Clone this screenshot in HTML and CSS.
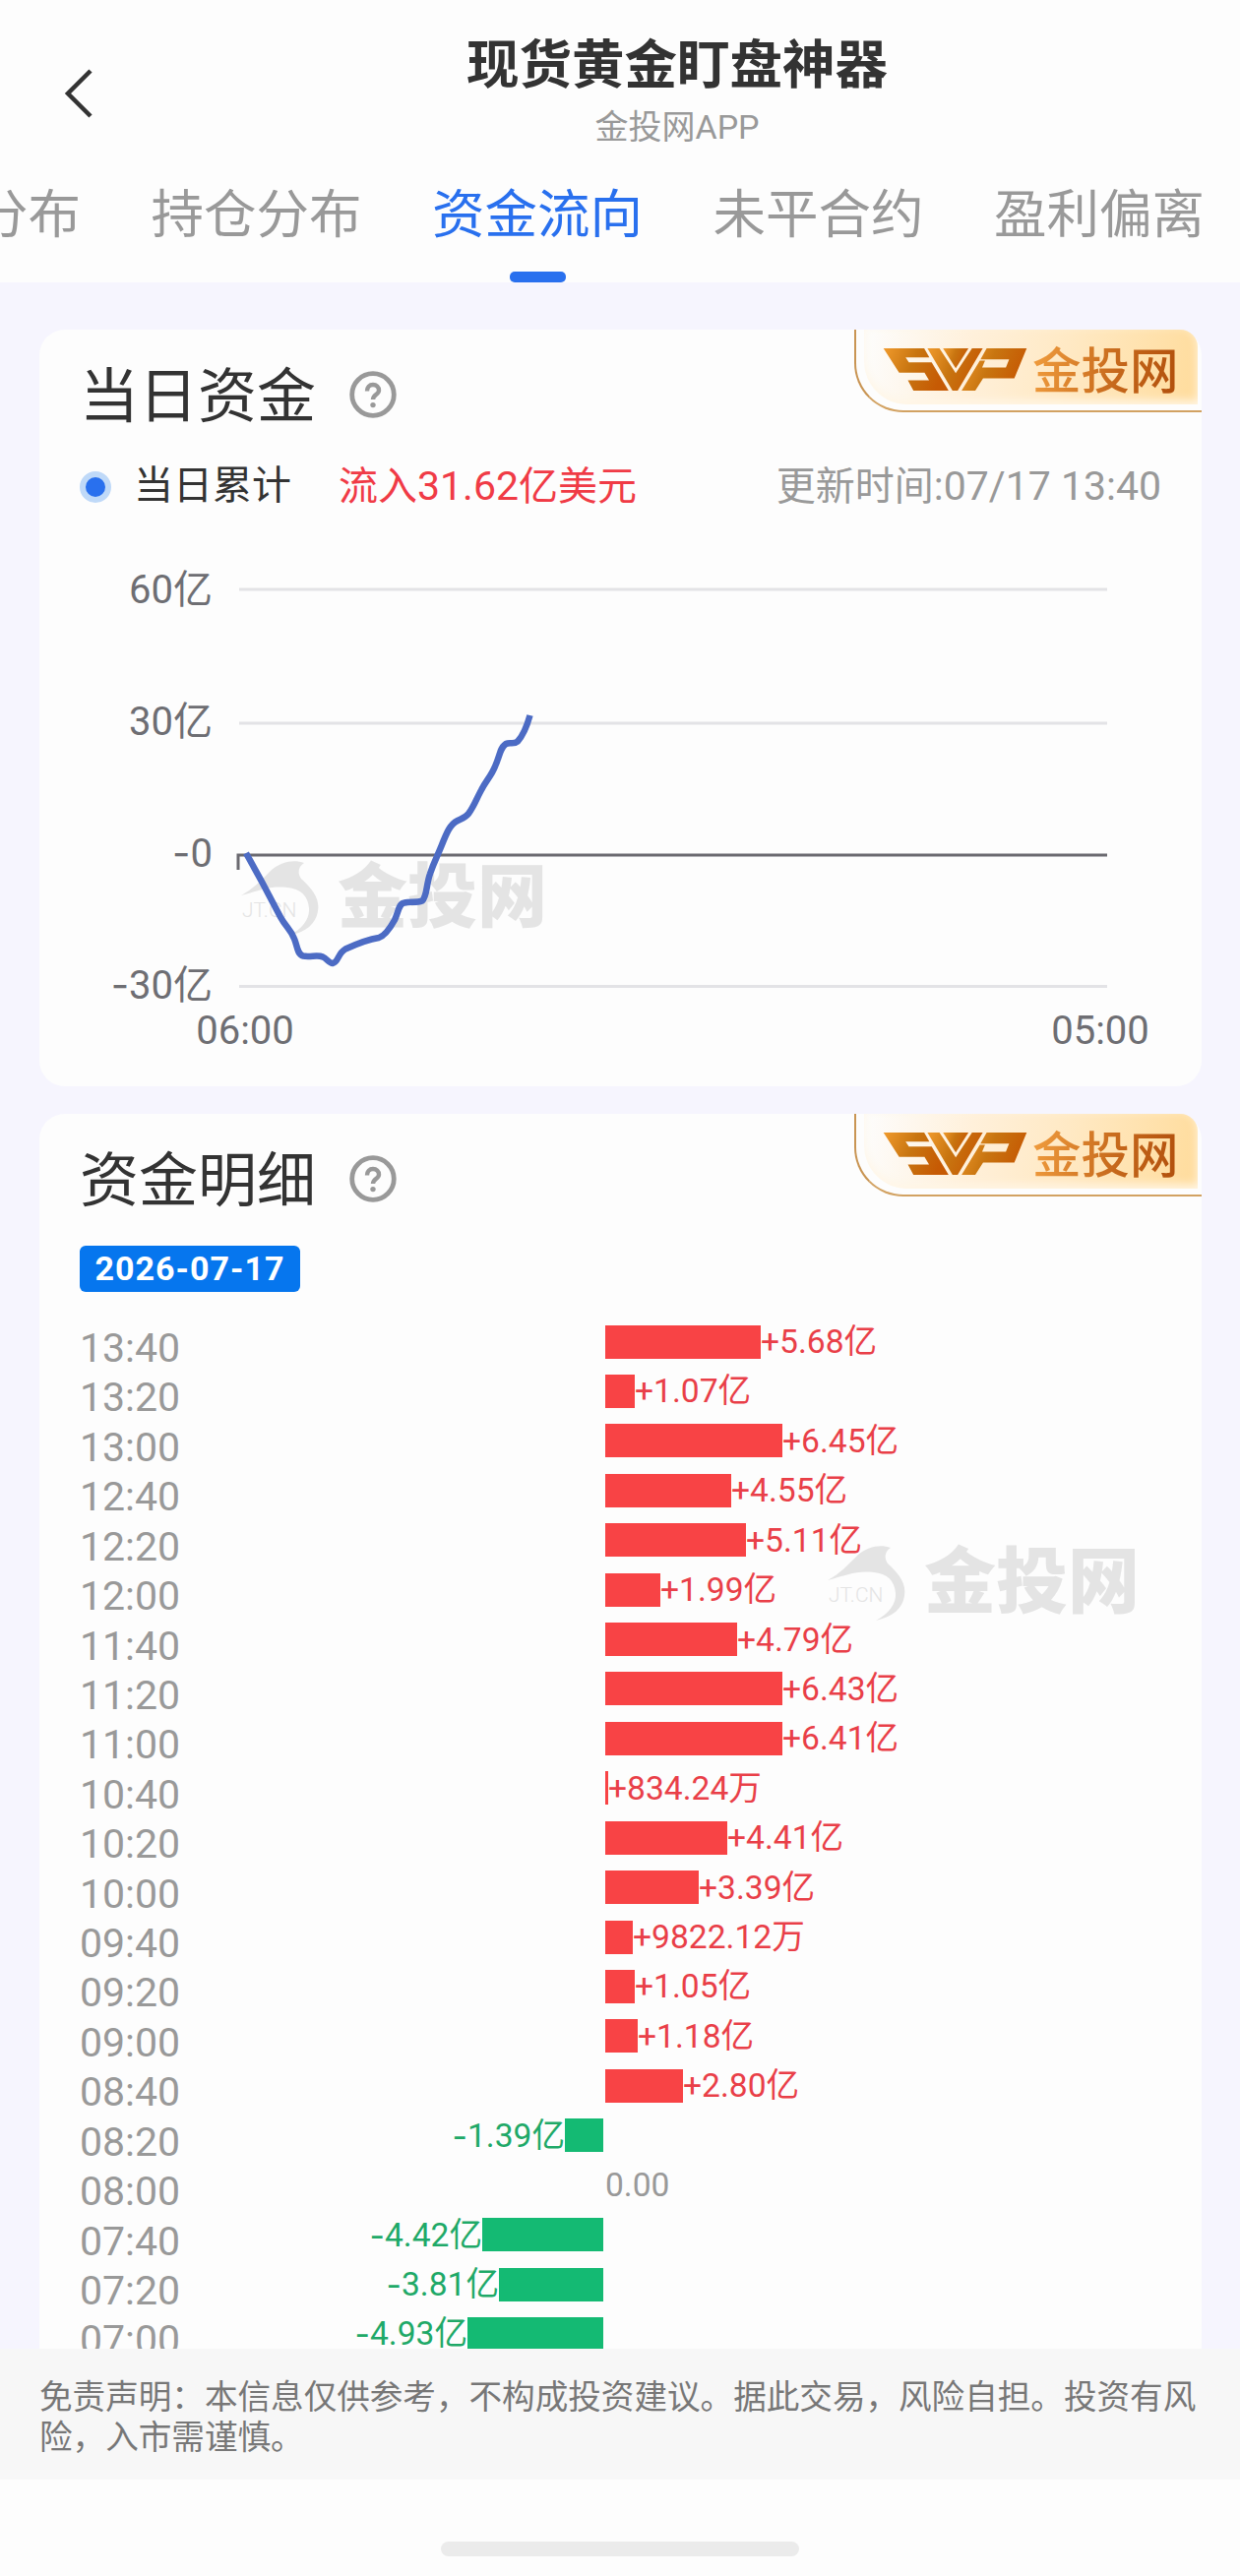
FILE: index.html
```html
<!DOCTYPE html>
<html lang="zh-CN">
<head>
    <meta charset="UTF-8">
    <meta name="viewport" content="width=device-width, initial-scale=1.0">
    <title>现货黄金盯盘神器</title>
    <link rel="stylesheet" href="styles.css">
</head>
<body>
    <!-- símbolos compartidos -->
    <svg class="symbols" width="0" height="0">
        <defs>
            <linearGradient id="gold" x1="0" y1="0" x2="1" y2="0.3">
                <stop offset="0" stop-color="#f09a2c"/>
                <stop offset="0.5" stop-color="#c87510"/>
                <stop offset="1" stop-color="#c65a04"/>
            </linearGradient>
        </defs>
        <symbol id="help" viewBox="0 0 48 48">
            <circle cx="24" cy="24" r="21.3" fill="none" stroke="#999" stroke-width="4.8"/>
            <path d="M18 20.500c0-4 2.500-6.500 6-6.500s6 2.300 6 5.700c0 4.300-6 4.500-6 9.300" fill="none" stroke="#999" stroke-width="4.400"/>
            <circle cx="24" cy="34.600" r="2.700" fill="#999"/>
        </symbol>
        <symbol id="emblem" viewBox="0 0 440 130">
            <g fill="url(#gold)">
                <path d="M0 0H125L141 28H68L78 43H148L200 130H92L75 98H140L126 75H48Z"/>
                <path d="M135 0H172L222 76L272 0H305L228 130H212Z"/>
                <path d="M183 0H261L222 61Z"/>
                <path d="M317 0H440L402 92H306L282 130H240L296 38H312L303 59H376L386 34H298Z"/>
            </g>
        </symbol>
        <symbol id="dolphin" viewBox="0 0 82 80">
            <path d="M1 38C14 31 22 22 32 12C42 4 54 1 65 5C59 9 58 15 62 21C75 33 81 42 79 54C77 67 67 75 50 79C63 72 71 62 70 51C69 38 61 31 48 30C30 28 20 33 1 38Z" fill="#e4e4e4"/>
        </symbol>
    </svg>

    <div class="app">
        <header class="header">
            <div class="title-bar">
                <svg class="back" viewBox="0 0 30 52" width="30" height="52">
                    <path d="M27 3L4 26L27 49" fill="none" stroke="#333" stroke-width="4.500"/>
                </svg>
                <div class="title-text">
                    <h1>现货黄金盯盘神器</h1>
                    <p>金投网APP</p>
                </div>
            </div>
            <nav class="tabs">
                <a class="tab">分布</a>
                <a class="tab">持仓分布</a>
                <a class="tab active">资金流向</a>
                <a class="tab">未平合约</a>
                <a class="tab">盈利偏离</a>
            </nav>
        </header>

        <main class="content">
            <section class="card card-day">
                <div class="badge">
                    <svg class="badge-logo" width="147" height="43"><use href="#emblem"/></svg>
                    <span>金投网</span>
                </div>
                <div class="card-title">
                    <h2>当日资金</h2>
                    <svg width="48" height="48"><use href="#help"/></svg>
                </div>
                <div class="legend">
                    <i class="dot"></i>
                    <span class="legend-name">当日累计</span>
                    <span class="legend-value">流入<b>31.62</b>亿美元</span>
                    <span class="legend-time">更新时间<b>:07/17 13:40</b></span>
                </div>
                <div class="watermark watermark-chart">
                    <svg width="82" height="80"><use href="#dolphin"/></svg>
                    <small>JT.CN</small>
                    <span>金投网</span>
                </div>
                <svg class="chart" viewBox="40 560 1181 520" width="1181" height="520">
                    <g stroke="#e3e3e6" stroke-width="3">
                        <line x1="243" y1="599" x2="1125" y2="599"/>
                        <line x1="243" y1="735" x2="1125" y2="735"/>
                        <line x1="243" y1="1002.500" x2="1125" y2="1002.500"/>
                    </g>
                    <path d="M242 884V869H1125" fill="none" stroke="#6b6a70" stroke-width="3"/>
                    <path d="M250 867L266 896L285 932C291 943 295 944 299 954C302 961 302 970 308 971.500C315 973 323 970 328 972.500C332 974 334 979 338 979C344 978 343 969 351 964.500C363 959 372 955 385 953C391 951 396 944 401 935C405 927 405 918 411 917.500C417 916 423 918 429 915.500C434 911 433 899 437 888C441 876 444 871 448 861C454 846 457 838 465 834C469 832 473 831 476 827C482 819 485 810 489 803C494 793 499 789 503 779C508 768 508 760 514 756C518 754 522 757 526 753.500C531 748 536 736 538.500 727" fill="none" stroke="#4c6bc4" stroke-width="6.500"/>
                    <g text-anchor="end">
                        <text x="216" y="613">60亿</text>
                        <text x="216" y="747">30亿</text>
                        <text x="216" y="881"><tspan class="minus">-</tspan>0</text>
                        <text x="216" y="1015"><tspan class="minus">-</tspan>30亿</text>
                    </g>
                    <g text-anchor="middle">
                        <text x="249" y="1061">06:00</text>
                        <text x="1118" y="1061">05:00</text>
                    </g>
                </svg>
            </section>

            <section class="card card-detail">
                <div class="badge">
                    <svg class="badge-logo" width="147" height="43"><use href="#emblem"/></svg>
                    <span>金投网</span>
                </div>
                <div class="card-title">
                    <h2>资金明细</h2>
                    <svg width="48" height="48"><use href="#help"/></svg>
                </div>
                <div class="date">2026-07-17</div>
                <div class="watermark watermark-list">
                    <svg width="82" height="80"><use href="#dolphin"/></svg>
                    <small>JT.CN</small>
                    <span>金投网</span>
                </div>
                <ul class="rows">
                    <li><time>13:40</time><div class="up"><i style="width:158px"></i>+5.68亿</div></li>
                    <li><time>13:20</time><div class="up"><i style="width:30px"></i>+1.07亿</div></li>
                    <li><time>13:00</time><div class="up"><i style="width:180px"></i>+6.45亿</div></li>
                    <li><time>12:40</time><div class="up"><i style="width:128px"></i>+4.55亿</div></li>
                    <li><time>12:20</time><div class="up"><i style="width:143px"></i>+5.11亿</div></li>
                    <li><time>12:00</time><div class="up"><i style="width:56px"></i>+1.99亿</div></li>
                    <li><time>11:40</time><div class="up"><i style="width:134px"></i>+4.79亿</div></li>
                    <li><time>11:20</time><div class="up"><i style="width:180px"></i>+6.43亿</div></li>
                    <li><time>11:00</time><div class="up"><i style="width:180px"></i>+6.41亿</div></li>
                    <li><time>10:40</time><div class="up"><i style="width:3px"></i>+834.24万</div></li>
                    <li><time>10:20</time><div class="up"><i style="width:124px"></i>+4.41亿</div></li>
                    <li><time>10:00</time><div class="up"><i style="width:95px"></i>+3.39亿</div></li>
                    <li><time>09:40</time><div class="up"><i style="width:28px"></i>+9822.12万</div></li>
                    <li><time>09:20</time><div class="up"><i style="width:30px"></i>+1.05亿</div></li>
                    <li><time>09:00</time><div class="up"><i style="width:33px"></i>+1.18亿</div></li>
                    <li><time>08:40</time><div class="up"><i style="width:79px"></i>+2.80亿</div></li>
                    <li><time>08:20</time><div class="down"><span class="minus">-</span>1.39亿<i style="width:39px"></i></div></li>
                    <li><time>08:00</time><div class="up flat">0.00</div></li>
                    <li><time>07:40</time><div class="down"><span class="minus">-</span>4.42亿<i style="width:123px"></i></div></li>
                    <li><time>07:20</time><div class="down"><span class="minus">-</span>3.81亿<i style="width:106px"></i></div></li>
                    <li><time>07:00</time><div class="down"><span class="minus">-</span>4.93亿<i style="width:138px"></i></div></li>
                </ul>
            </section>
        </main>

        <footer class="disclaimer">免责声明：本信息仅供参考，不构成投资建议。据此交易，风险自担。投资有风险，入市需谨慎。</footer>
        <div class="home-bar"><i></i></div>
    </div>
</body>
</html>
```
FILE: styles.css
```css
:root {
    --primary-color: #2970ee;
    --up-color: #f84345;
    --down-color: #14ba73;
    --muted-color: #999;
    --text-color: #333;
    --background-color: #f6f5fe;
}

* {
    box-sizing: border-box;
    margin: 0;
    padding: 0;
}

body {
    font-family: Roboto, 'Noto Sans CJK SC', sans-serif;
    background: #fdfdfd;
    color: var(--text-color);
}

b,
i {
    font-weight: normal;
    font-style: normal;
}

.symbols {
    display: block;
}

.app {
    display: flex;
    flex-direction: column;
    width: 1260px;
    height: 2618px;
    overflow: hidden;
    background: #fdfdfd;
}

/* cabecera */
.header {
    flex: none;
    height: 287px;
    background: #fdfdfd;
}

.title-bar {
    display: flex;
    height: 164px;
    padding: 35px 0 0 65px;
}

.back {
    flex: none;
    margin-top: 34px;
}

.title-text {
    flex: none;
    width: 1186px;
    text-align: center;
}

.title-text h1 {
    font-size: 53.5px;
    line-height: 64px;
    font-weight: 700;
}

.title-text p {
    margin-top: 10px;
    font-size: 34px;
    line-height: 40px;
    color: var(--muted-color);
}

.tabs {
    display: flex;
    gap: 71.5px;
    height: 123px;
    margin-left: -132px;
}

.tab {
    position: relative;
    flex: none;
    width: 214px;
    padding-top: 20px;
    font-size: 53.5px;
    line-height: 70px;
    color: var(--muted-color);
    white-space: nowrap;
    text-align: right;
}

.tab.active {
    color: var(--primary-color);
}

.tab.active::after {
    content: "";
    position: absolute;
    left: 79px;
    bottom: 0;
    width: 57px;
    height: 11px;
    border-radius: 5px;
    background: var(--primary-color);
}

.content {
    flex: none;
    height: 2100px;
    padding: 48px 39px 0 40px;
    overflow: hidden;
    background: var(--background-color);
}

.card {
    position: relative;
    border-radius: 26px;
    background: #fdfdfd;
}

.card-day {
    height: 769px;
    margin-bottom: 28px;
}

.card-detail {
    height: 1400px;
}

.card-title {
    display: flex;
    align-items: center;
    gap: 34px;
    height: 132px;
    padding-left: 41px;
}

.card-title h2 {
    padding-top: 6px;
    font-size: 60px;
    line-height: 80px;
    font-weight: 400;
}

/* insignia dorada */
.badge {
    position: absolute;
    top: 0;
    right: 0;
    display: flex;
    align-items: center;
    width: 353px;
    height: 84px;
    padding: 0 0 2px 27px;
    border-left: 2px solid #c99554;
    border-bottom: 2px solid #d2a262;
    border-bottom-left-radius: 50px;
}

.badge::before {
    content: "";
    position: absolute;
    inset: 0 4px 6px 8px;
    border-radius: 0 18px 0 44px;
    background: linear-gradient(100deg, #fdfdfd 0%, #fff0da 32%, #ffe9c4 60%, #ffdc9c 100%);
    box-shadow: inset 0 -4px 10px #fff6e6;
}

.badge-logo,
.badge span {
    position: relative;
}

.badge span {
    margin-left: 5px;
    padding-top: 5px;
    font-size: 49.5px;
    line-height: 70px;
    font-weight: 500;
    background: linear-gradient(100deg, #ee9a3c 5%, #c4661a 60%, #b04e0c 100%);
    -webkit-background-clip: text;
    background-clip: text;
    color: transparent;
}

.legend {
    display: flex;
    align-items: center;
    height: 54px;
    padding: 0 41px 0 41px;
    font-size: 40px;
    line-height: 50px;
}

.legend b {
    font-size: 41px;
}

.dot {
    width: 32px;
    height: 32px;
    margin-top: 2px;
    border: 6px solid #bfd9f8;
    border-radius: 50%;
    background: var(--primary-color);
}

.legend-name {
    margin-left: 23px;
}

.legend-value {
    margin-left: 48px;
    color: #f03b46;
}

.legend-time {
    margin-left: auto;
    color: var(--muted-color);
}

.chart {
    position: relative;
    display: block;
    margin-top: 39px;
    fill: #6e6e73;
    font-size: 40px;
}

/* guion más ancho que el de Roboto */
.minus {
    font-family: Inter, sans-serif;
}

.watermark {
    position: absolute;
    display: flex;
    align-items: center;
    height: 80px;
    color: #e4e4e4;
}

.watermark small {
    position: absolute;
    left: 2px;
    top: 41px;
    font-size: 21px;
    font-weight: 300;
}

.watermark span {
    margin-left: 17px;
    font-size: 71px;
    line-height: 80px;
    font-weight: 900;
}

.watermark-chart {
    left: 204px;
    top: 537px;
}

.watermark-list {
    left: 800px;
    top: 436px;
}

.watermark-list span {
    font-size: 73px;
}

/* detalle por hora */
.date {
    width: 224px;
    height: 47px;
    margin: 2px 0 0 41px;
    border-radius: 6px;
    background: #0676ee;
    color: #fff;
    font-size: 34px;
    line-height: 47px;
    font-weight: 700;
    letter-spacing: 1px;
    text-align: center;
}

.rows {
    position: relative;
    margin-top: 25px;
    padding-left: 40px;
    list-style: none;
}

.rows li {
    display: grid;
    grid-template-columns: 130px 404px 1fr;
    height: 50.43px;
}

.rows time {
    padding: 7px 0 0 1px;
    font-size: 41px;
    line-height: 50px;
    color: var(--muted-color);
}

.rows div {
    display: flex;
    align-items: center;
    height: 51px;
    font-size: 33.6px;
    line-height: 51px;
    white-space: nowrap;
}

.rows i {
    height: 34px;
}

.up {
    grid-column: 3;
    padding-left: 1px;
    color: #e93f48;
}

.up i {
    background: var(--up-color);
}

.down {
    grid-column: 2;
    justify-content: flex-end;
    padding-right: 1px;
    color: #1fa968;
}

.down i {
    background: var(--down-color);
}

.rows .flat {
    color: var(--muted-color);
}

.disclaimer {
    flex: none;
    height: 133px;
    padding: 30px 39px 0 40px;
    background: #f7f7f7;
    color: #777;
    font-size: 33.6px;
    line-height: 40.5px;
}

.home-bar {
    display: flex;
    justify-content: center;
    padding-top: 63px;
}

.home-bar i {
    width: 364px;
    height: 15px;
    border-radius: 8px;
    background: #ebebeb;
}
```
